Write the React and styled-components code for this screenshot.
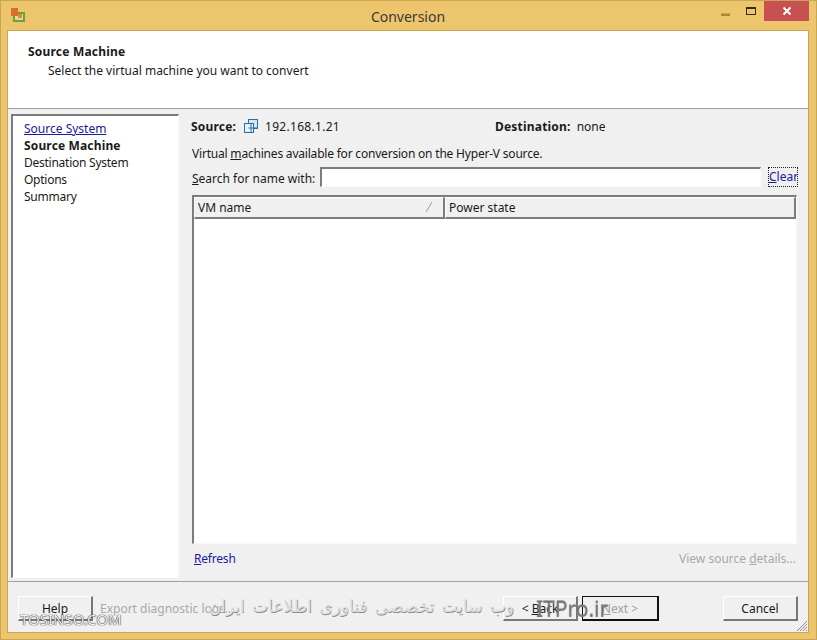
import React from 'react'
import styled, { createGlobalStyle } from 'styled-components'

const Global = createGlobalStyle`
  html, body { margin: 0; padding: 0; background: #fff; }
  * { box-sizing: border-box; }
`

const Win = styled.div`
  position: relative;
  width: 817px;
  height: 640px;
  overflow: hidden;
  display: flex;
  flex-direction: column;
  background: #edc56c;
  border: 1px solid #c9a653;
  padding: 0 7px 6px 6px;
  font-family: "Noto Sans", Tahoma, sans-serif;
  font-size: 12px;
  color: #1a1a1a;
`

const TitleBar = styled.div`
  position: relative;
  height: 29px;
  flex: none;
  display: flex;
  align-items: center;
  justify-content: center;
`

const AppIcon = styled.svg`
  position: absolute;
  left: 4px;
  top: 7px;
`

const Title = styled.div`
  font-size: 14px;
  color: #3a3a3a;
  margin-top: 1px;
`

const Controls = styled.div`
  position: absolute;
  right: 0;
  top: 0;
  display: flex;
  align-items: flex-start;
`

const CtlBtn = styled.div`
  width: ${p => p.$w}px;
  height: 20px;
  display: flex;
  align-items: ${p => (p.$low ? 'flex-end' : 'center')};
  justify-content: center;
  padding-bottom: ${p => (p.$low ? 5 : 0)}px;
  background: ${p => p.$bg || 'transparent'};
`

const Client = styled.div`
  flex: 1;
  min-height: 0;
  display: flex;
  flex-direction: column;
  background: #f0f0f0;
  border: 1px solid #c9a653;
`

const Header = styled.div`
  height: 78px;
  flex: none;
  background: #fff;
  border-bottom: 1px solid #a0a0a0;
  padding: 13px 0 0 20px;
`

const HeadTitle = styled.div`
  font-weight: 700;
  font-size: 12px;
  line-height: 15px;
  letter-spacing: 0.2px;
`

const HeadSub = styled.div`
  margin: 4px 0 0 20px;
  line-height: 16px;
`

const Middle = styled.div`
  flex: 1;
  min-height: 0;
  display: flex;
  padding: 5px 10px 3px 3px;
`

const Nav = styled.div`
  width: 168px;
  flex: none;
  background: #fff;
  border-top: 2px solid #7c7c7c;
  border-left: 2px solid #7c7c7c;
  border-right: 1px solid #fafafa;
  border-bottom: 1px solid #fafafa;
  padding: 4px 0 0 11px;
  display: flex;
  flex-direction: column;
`

const NavItem = styled.div`
  height: 17px;
  line-height: 17px;
  font-weight: ${p => (p.$active ? 700 : 400)};
  color: ${p => (p.$link ? '#1a1a9a' : '#1a1a1a')};
  text-decoration: ${p => (p.$link ? 'underline' : 'none')};
  letter-spacing: ${p => (p.$active ? 0.15 : p.$link ? 0 : -0.25)}px;
`

const Panel = styled.div`
  flex: 1;
  min-width: 0;
  display: flex;
  flex-direction: column;
  padding: 3px 0 0 12px;
`

const SourceRow = styled.div`
  display: flex;
  align-items: center;
  height: 18px;
`

const Bold = styled.span`
  font-weight: 700;
  letter-spacing: 0.2px;
`

const SourceLabel = styled(Bold)`
  width: 53px;
`

const SourceIp = styled.span`
  width: 230px;
  letter-spacing: 0.3px;
`

const DestValue = styled.span`
  margin-left: 6px;
`

const Info = styled.div`
  margin: 11px 0 0 1px;
  height: 16px;
  line-height: 16px;
  letter-spacing: -0.2px;
`

const SearchRow = styled.div`
  display: flex;
  align-items: center;
  height: 20px;
  margin: 5px 0 0 1px;
`

const SearchLabel = styled.span`
  width: 128px;
  flex: none;
  padding-top: 2px;
`

const SearchInput = styled.div`
  width: 441px;
  height: 20px;
  background: #fff;
  border-top: 2px solid #7c7c7c;
  border-left: 2px solid #7c7c7c;
  border-right: 1px solid #fafafa;
  border-bottom: 1px solid #fafafa;
`

const ClearLink = styled.a`
  margin-left: 7px;
  padding: 0 1px;
  height: 20px;
  width: 30px;
  line-height: 19px;
  color: #1a1a9a;
  outline: 1px dotted #222;
  outline-offset: -1px;
`

const Table = styled.div`
  flex: 1;
  min-height: 0;
  margin: 8px 0 0 1px;
  width: 605px;
  background: #fff;
  border-top: 2px solid #7c7c7c;
  border-left: 2px solid #7c7c7c;
  border-right: 1px solid #fafafa;
  border-bottom: 1px solid #fafafa;
`

const TableHead = styled.div`
  display: flex;
  height: 22px;
`

const HeadCell = styled.div`
  position: relative;
  width: ${p => p.$w}px;
  flex: ${p => (p.$w ? 'none' : 1)};
  display: flex;
  align-items: center;
  padding-left: 3px;
  background: #f0f0f0;
  border-top: 1px solid #fff;
  border-left: 1px solid #fff;
  border-right: 2px solid #7c7c7c;
  border-bottom: 2px solid #7c7c7c;
`

const SortMark = styled.svg`
  position: absolute;
  right: 10px;
  top: 3px;
`

const PanelFoot = styled.div`
  display: flex;
  justify-content: space-between;
  height: 34px;
  flex: none;
  padding: 6px 0 0 3px;
  width: 605px;
  line-height: 18px;
`

const LinkText = styled.span`
  color: #1a1a9a;
  letter-spacing: -0.2px;
`

const Disabled = styled.span`
  color: #a8a8a8;
`

const U = styled.span`
  text-decoration: underline;
`

const Footer = styled.div`
  position: relative;
  height: 51px;
  flex: none;
  display: flex;
  align-items: flex-start;
  border-top: 1px solid #a0a0a0;
  padding: 14px 10px 0 10px;
`

const Btn = styled.div`
  width: 75px;
  height: 25px;
  flex: none;
  display: flex;
  align-items: center;
  justify-content: center;
  background: #f0f0f0;
  color: ${p => (p.$off ? '#a0a0a0' : '#1a1a1a')};
  border-top: 1px solid #fff;
  border-left: 1px solid #fff;
  border-right: 2px solid #777;
  border-bottom: 2px solid #777;
`

const NextBtn = styled(Btn)`
  width: 77px;
  margin-left: 4px;
  border: 2px solid #111;
  border-top-width: 1px;
  border-left-width: 1px;
`

const ExportText = styled(Disabled)`
  margin: 4px 0 0 7px;
  flex: 1;
`

const Grip = styled.svg`
  position: absolute;
  right: 0;
  bottom: 0;
`

const CancelBtn = styled(Btn)`
  margin-left: 64px;
`

const Persian = styled.div`
  position: absolute;
  left: 208px;
  top: 595px;
  width: 305px;
  direction: rtl;
  font-family: "DejaVu Sans", sans-serif;
  font-size: 17px;
  word-spacing: 2px;
  white-space: nowrap;
  color: #dedede;
  text-shadow: 0.6px 0.6px 0 #8c8c8c;
`

const MarkLeft = styled.div`
  position: absolute;
  left: 19px;
  top: 609px;
  font-size: 15px;
  line-height: 18px;
  color: #f4f4f4;
  text-shadow: 0 0 1px #222, 0 0 1px #222;
`

const MarkRight = styled.div`
  position: absolute;
  left: 535px;
  top: 593px;
  font-size: 21px;
  line-height: 28px;
  color: rgba(120,120,120,0.6);
  text-shadow: 0 1px 0 #777;
`

function VmIcon() {
  return (
    <svg width="14" height="14" viewBox="0 0 14 14" fill="none" style={{ marginRight: 7, flex: 'none' }}>
      <rect x="4.5" y="0.5" width="9" height="9" fill="#d5e6f4" stroke="#2a6ea8" />
      <rect x="0.5" y="4.5" width="9" height="9" fill="#e8f1f9" stroke="#2a6ea8" />
      <path d="M7 4.5V13.5M4.5 9H13.5" stroke="#2a6ea8" />
    </svg>
  )
}

export default function App() {
  return (
    <>
      <Global />
      <Win>
        <TitleBar>
          <AppIcon width="14" height="14" viewBox="0 0 14 14">
            <rect x="3" y="5" width="10" height="8" fill="#e8d795" stroke="#6aa336" strokeWidth="2" />
            <rect x="0" y="0" width="7" height="8" fill="#d8702c" />
            <rect x="7" y="6" width="4" height="4" fill="#e08a3c" />
          </AppIcon>
          <Title>Conversion</Title>
          <Controls>
            <CtlBtn $w={26} $low>
              <svg width="9" height="3"><rect width="9" height="2.5" y="0.5" fill="#a8873a" /></svg>
            </CtlBtn>
            <CtlBtn $w={26}>
              <svg width="10" height="8"><rect x="0.5" y="0.5" width="9" height="7" fill="none" stroke="#3a2c10" /><rect x="0" y="0" width="10" height="2" fill="#3a2c10" /></svg>
            </CtlBtn>
            <CtlBtn $w={45} $bg="#c75050">
              <svg width="10" height="10" viewBox="0 0 10 10"><path d="M1.5 1.5L8.5 8.5M8.5 1.5L1.5 8.5" stroke="#fff" strokeWidth="2" /></svg>
            </CtlBtn>
          </Controls>
        </TitleBar>
        <Client>
          <Header>
            <HeadTitle>Source Machine</HeadTitle>
            <HeadSub>Select the virtual machine you want to convert</HeadSub>
          </Header>
          <Middle>
            <Nav>
              <NavItem $link>Source System</NavItem>
              <NavItem $active>Source Machine</NavItem>
              <NavItem>Destination System</NavItem>
              <NavItem>Options</NavItem>
              <NavItem>Summary</NavItem>
            </Nav>
            <Panel>
              <SourceRow>
                <SourceLabel>Source:</SourceLabel>
                <VmIcon />
                <SourceIp>192.168.1.21</SourceIp>
                <Bold>Destination:</Bold>
                <DestValue>none</DestValue>
              </SourceRow>
              <Info>Virtual <U>m</U>achines available for conversion on the Hyper-V source.</Info>
              <SearchRow>
                <SearchLabel><U>S</U>earch for name with:</SearchLabel>
                <SearchInput />
                <ClearLink><U>C</U>lear</ClearLink>
              </SearchRow>
              <Table>
                <TableHead>
                  <HeadCell $w={251}>
                    VM name
                    <SortMark width="8" height="12" viewBox="0 0 8 12"><path d="M1 11L7 1" stroke="#9a9a9a" /></SortMark>
                  </HeadCell>
                  <HeadCell>Power state</HeadCell>
                </TableHead>
              </Table>
              <PanelFoot>
                <LinkText><U>R</U>efresh</LinkText>
                <Disabled>View source <U>d</U>etails...</Disabled>
              </PanelFoot>
            </Panel>
          </Middle>
          <Footer>
            <Btn>Help</Btn>
            <ExportText>Export diagnostic logs...</ExportText>
            <Btn><span>&lt; <U>B</U>ack</span></Btn>
            <NextBtn $off><span><U>N</U>ext &gt;</span></NextBtn>
            <CancelBtn>Cancel</CancelBtn>
            <Grip width="12" height="12" viewBox="0 0 12 12">
              <path d="M11 1L1 11M11 4L4 11M11 7L7 11M11 10L10 11" stroke="#8a8a8a" />
            </Grip>
          </Footer>
        </Client>
        <MarkLeft>TOSINSO.COM</MarkLeft>
        <Persian>وب سایت تخصصی فناوری اطلاعات ایران</Persian>
        <MarkRight>ITPro.ir</MarkRight>
      </Win>
    </>
  )
}
